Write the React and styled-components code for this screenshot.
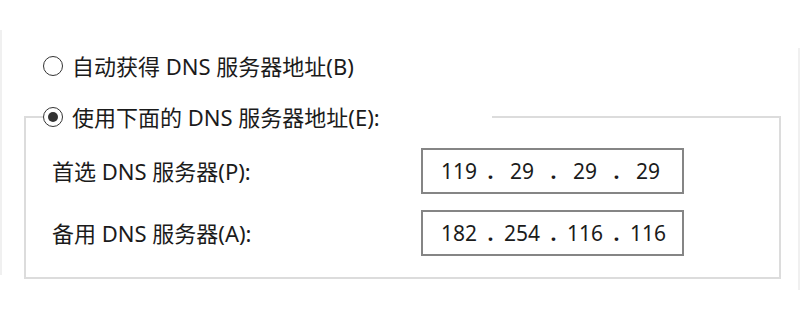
import React from "react";
import styled, { createGlobalStyle } from "styled-components";

const GlobalStyle = createGlobalStyle`
  html, body {
    margin: 0;
    padding: 0;
    background: #ffffff;
  }
  body {
    font-family: "Noto Sans", "Noto Sans CJK SC", sans-serif;
    color: #1b1b1b;
  }
`;

const Page = styled.div`
  width: 800px;
  height: 320px;
  box-sizing: border-box;
  padding-top: 51px;
  position: relative;

  &::before {
    content: "";
    position: absolute;
    left: 0;
    top: 30px;
    height: 245px;
    border-left: 2px solid #f0f0f0;
  }
  &::after {
    content: "";
    position: absolute;
    right: 0;
    top: 48px;
    height: 242px;
    border-right: 2px solid #f0f0f0;
  }
`;

const OptionRow = styled.label`
  display: flex;
  align-items: center;
  gap: 9px;
  height: 30px;
  font-size: 22px;
  line-height: 30px;
  white-space: nowrap;
`;

const Radio = styled.span`
  width: 20px;
  height: 20px;
  box-sizing: border-box;
  border: 1.7px solid #333333;
  border-radius: 50%;
  display: inline-flex;
  align-items: center;
  justify-content: center;
  flex: none;

  &::after {
    content: "";
    width: 10px;
    height: 10px;
    border-radius: 50%;
    background: ${(p) => (p.$checked ? "#333333" : "transparent")};
  }
`;

const FirstOption = styled(OptionRow)`
  margin-left: 43px;
  margin-bottom: 21px;
`;

const Group = styled.fieldset`
  margin: 0 0 0 24px;
  width: 757px;
  box-sizing: border-box;
  border: 2px solid #dcdcdc;
  padding: 16px 0 21px 0;
  min-inline-size: 0;
`;

const Legend = styled.legend`
  margin-left: 17px;
  padding: 0;
  width: 449px;
`;

const Rows = styled.div`
  display: grid;
  grid-template-columns: 369px 263px;
  grid-auto-rows: 46px;
  row-gap: 16px;
  align-items: center;
  padding-left: 26px;
`;

const FieldLabel = styled.span`
  font-size: 22px;
  white-space: nowrap;
  margin-top: -3px;
`;

const IpBox = styled.div`
  height: 46px;
  box-sizing: border-box;
  border: 2px solid #858585;
  display: flex;
  align-items: center;
  padding-left: 11px;
  font-size: 21px;
  background: #fff;
`;

const Octet = styled.span`
  width: 50px;
  text-align: center;
`;

const Dot = styled.span`
  width: 13px;
  text-align: center;
  font-weight: 700;
`;

function IpAddress({ value }) {
  const parts = value.split(".");
  return (
    <IpBox>
      {parts.map((part, i) => (
        <React.Fragment key={i}>
          {i > 0 && <Dot>.</Dot>}
          <Octet>{part}</Octet>
        </React.Fragment>
      ))}
    </IpBox>
  );
}

export default function App() {
  return (
    <>
      <GlobalStyle />
      <Page>
        <FirstOption>
          <Radio />
          自动获得 DNS 服务器地址(B)
        </FirstOption>
        <Group>
          <Legend>
            <OptionRow>
              <Radio $checked />
              使用下面的 DNS 服务器地址(E):
            </OptionRow>
          </Legend>
          <Rows>
            <FieldLabel>首选 DNS 服务器(P):</FieldLabel>
            <IpAddress value="119.29.29.29" />
            <FieldLabel>备用 DNS 服务器(A):</FieldLabel>
            <IpAddress value="182.254.116.116" />
          </Rows>
        </Group>
      </Page>
    </>
  );
}
